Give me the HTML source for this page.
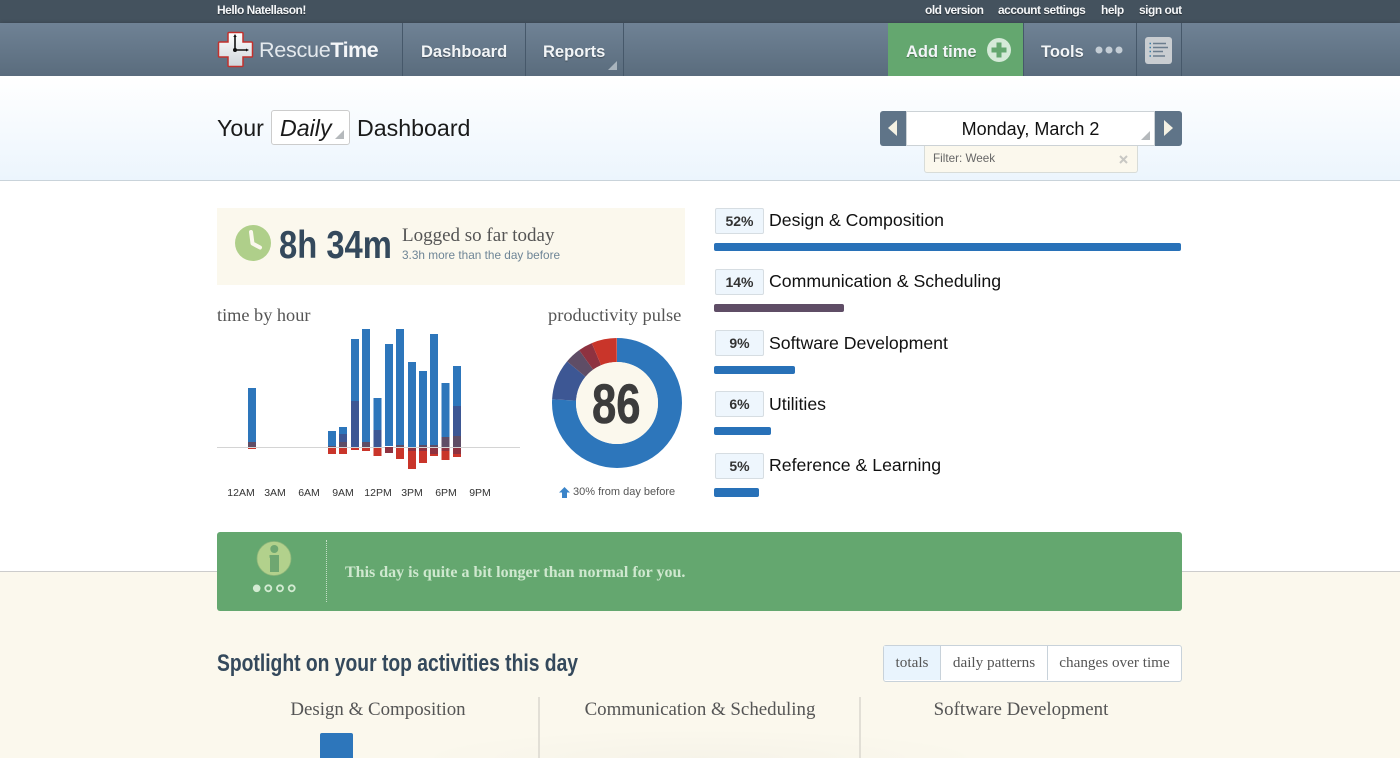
<!DOCTYPE html>
<html><head><meta charset="utf-8"><title>RescueTime</title>
<style>
html,body{margin:0;padding:0;background:#fff}
#p{position:relative;width:1400px;height:758px;overflow:hidden;font-family:"Liberation Sans",sans-serif;background:#fff}
.a{position:absolute}
.t{position:absolute;white-space:nowrap}
.s{font-family:"Liberation Serif",serif}
.c{transform-origin:0 50%;font-weight:bold}
.nav{font-size:16.5px;font-weight:bold;color:#f2f5f7;line-height:20px;top:42px;text-shadow:0 1px 1px rgba(0,0,0,.35)}
.top{font-size:12px;font-weight:bold;color:#f4f6f8;top:3px;line-height:14px;text-shadow:0 1px 1px rgba(0,0,0,.5);letter-spacing:-.5px}
.d{position:absolute;width:1px;top:23px;height:53px;background:#46586a}
.b{position:absolute;left:715px;width:47px;height:24px;background:#eef6fd;border:1px solid #d6dde2;border-radius:2px;text-align:center;font-size:14px;font-weight:bold;line-height:25px;color:#333}
.l{position:absolute;left:769px;font-size:17.7px;line-height:22px;color:#111;white-space:nowrap}
.bar{position:absolute;left:714px;height:8px;background:#2871b8;border-radius:2px}
.h{font-size:10.5px;color:#333;line-height:12px;top:487px;text-align:center;width:40px}
.tab{position:absolute;top:646px;height:34px;line-height:34px;font-size:15.2px;color:#555;text-align:center;font-family:"Liberation Serif",serif}
.ct{font-size:18.9px;color:#555;line-height:24px;top:698px;text-align:center;width:300px}
</style></head><body><div id="p">

<div class="a" style="left:0;top:0;width:1400px;height:23px;background:#44525e"></div>
<div class="a" style="left:0;top:23px;width:1400px;height:53px;background:linear-gradient(#6f8295,#5a6c7d);box-shadow:0 1px 4px rgba(0,0,0,.35)"></div>
<div class="a" style="left:0;top:76px;width:1400px;height:104px;background:linear-gradient(#fff,#ecf5fd);border-bottom:1px solid #c9d3da"></div>

<div class="t top" style="left:217px">Hello Natellason!</div>
<div class="t top" style="left:925px">old version</div>
<div class="t top" style="left:998px">account settings</div>
<div class="t top" style="left:1101px">help</div>
<div class="t top" style="left:1139px">sign out</div>

<svg class="a" style="left:217px;top:31px" width="37" height="37" viewBox="0 0 37 37">
<defs><linearGradient id="g" x1="0" y1="0" x2="0" y2="1"><stop offset="0" stop-color="#fff"/><stop offset="1" stop-color="#cfd5da"/></linearGradient></defs>
<path d="M12 1.500h13a1 1 0 0 1 1 1v8.500h8.500a1 1 0 0 1 1 1v13a1 1 0 0 1-1 1h-8.500v8.500a1 1 0 0 1-1 1h-13a1 1 0 0 1-1-1v-8.500h-8.500a1 1 0 0 1-1-1v-13a1 1 0 0 1 1-1h8.500v-8.500a1 1 0 0 1 1-1z" fill="url(#g)" stroke="#c2302c" stroke-width="1.500"/>
<path d="M18 5v14M18 19h12" stroke="#111" stroke-width="1.600" fill="none"/><circle cx="18" cy="19" r="2" fill="#111"/>
<path d="M16.300 6l1.700-3 1.700 3zM29 17.500l3 1.500-3 1.500z" fill="#111"/>
</svg>
<div class="t" style="left:259px;top:37px;font-size:21.6px;line-height:26px;color:#e4e9ed;letter-spacing:-.3px">Rescue<b style="color:#f4f6f8;font-weight:bold;letter-spacing:-.6px">Time</b></div>

<div class="d" style="left:402px"></div><div class="d" style="left:525px"></div><div class="d" style="left:623px"></div>
<div class="t nav" style="left:421px">Dashboard</div>
<div class="t nav" style="left:543px">Reports</div>
<svg class="a" style="left:608px;top:61px" width="10" height="10"><path d="M9 0v9H0z" fill="#a9b4bd"/></svg>

<div class="a" style="left:888px;top:23px;width:135px;height:53px;background:#64a76f"></div>
<div class="t nav" style="left:906px">Add time</div>
<svg class="a" style="left:987px;top:38px" width="24" height="24"><circle cx="12" cy="12" r="12" fill="#d5ead8"/><path d="M9.500 4.500h5v5H19.500v5h-5v5h-5v-5H4.500v-5h5z" fill="#64a76f"/></svg>
<div class="d" style="left:1023px"></div><div class="d" style="left:1136px"></div><div class="d" style="left:1181px"></div>
<div class="t nav" style="left:1041px">Tools</div>
<svg class="a" style="left:1095px;top:45px" width="30" height="10"><circle cx="4" cy="5" r="3.500" fill="#c4cdd5"/><circle cx="14" cy="5" r="3.500" fill="#c4cdd5"/><circle cx="24" cy="5" r="3.500" fill="#c4cdd5"/></svg>
<svg class="a" style="left:1145px;top:37px" width="28" height="28"><rect x="0" y="0" width="27" height="27" rx="3" fill="#c9cdd1"/><path d="M8 6.500h13M8 10.500h15M8 14.500h10M8 19h12" stroke="#6b7d8e" stroke-width="1.500"/><path d="M4.500 6.500h1.500M4.500 10.500h1.500M4.500 14.500h1.500M4.500 19h1.500" stroke="#3c7ea8" stroke-width="1.500"/></svg>

<div class="t" style="left:217px;top:114px;font-size:23.2px;line-height:28px;color:#1a1a1a">Your</div>
<div class="a" style="left:271px;top:110px;width:77px;height:33px;background:#fff;border:1px solid #ccc;border-radius:3px"></div>
<div class="t" style="left:280px;top:114px;font-size:23.2px;line-height:28px;font-style:italic;color:#1a1a1a">Daily</div>
<svg class="a" style="left:335px;top:130px" width="10" height="10"><path d="M9 0v9H0z" fill="#b5b9bc"/></svg>
<div class="t" style="left:357px;top:114px;font-size:23.2px;line-height:28px;color:#1a1a1a">Dashboard</div>

<div class="a" style="left:906px;top:111px;width:249px;height:35px;background:#fff;box-shadow:0 0 0 1px #ccd2d6 inset"></div>
<div class="a" style="left:880px;top:111px;width:26px;height:35px;background:#5f7488;border-radius:3px 0 0 3px"></div>
<div class="a" style="left:1155px;top:111px;width:27px;height:35px;background:#5f7488;border-radius:0 3px 3px 0"></div>
<svg class="a" style="left:888px;top:119px" width="10" height="18"><path d="M9 1v16L0 9z" fill="#f4f1e3"/></svg>
<svg class="a" style="left:1164px;top:119px" width="10" height="18"><path d="M0 1v16L9 9z" fill="#f4f1e3"/></svg>
<div class="t" style="left:906px;width:249px;text-align:center;top:118px;font-size:18px;line-height:22px;color:#111">Monday, March 2</div>
<svg class="a" style="left:1141px;top:131px" width="10" height="10"><path d="M9 0v9H0z" fill="#b5b9bc"/></svg>
<div class="a" style="left:924px;top:146px;width:212px;height:26px;background:#fbf8ed;border:1px solid #d8dcd8;border-top:0;border-radius:0 0 3px 3px"></div>
<div class="t" style="left:933px;top:152px;font-size:11.7px;line-height:14px;color:#666">Filter: Week</div>
<svg class="a" style="left:1119px;top:155px" width="9" height="9"><path d="M1 1l7 7M8 1L1 8" stroke="#c8c8c4" stroke-width="2"/></svg>

<div class="a" style="left:217px;top:208px;width:468px;height:77px;background:#fbf8ed"></div>
<svg class="a" style="left:235px;top:225px" width="36" height="36"><circle cx="18" cy="18" r="18" fill="#afcf8a"/><path d="M16 7l1.500 11.500L25 22.500" stroke="#fbf8ed" stroke-width="4" fill="none" stroke-linecap="round" stroke-linejoin="round"/></svg>
<div class="t c" style="left:279px;top:224px;font-size:39px;line-height:44px;color:#34495c;transform:scaleX(.84)">8h 34m</div>
<div class="t s" style="left:402px;top:225px;font-size:19px;line-height:22px;color:#555">Logged so far today</div>
<div class="t" style="left:402px;top:248px;font-size:11.8px;line-height:14px;color:#6e8596">3.3h more than the day before</div>

<div class="t s" style="left:217px;top:304px;font-size:18.3px;line-height:22px;color:#555">time by hour</div>
<svg class="a" style="left:0;top:0" width="700" height="520">
<rect x="217" y="447" width="303" height="1" fill="#d4d4d4"/>
<g fill="#2d76bb">
<rect x="248" y="388" width="8" height="54"/><rect x="328" y="431" width="8" height="15"/><rect x="339" y="427" width="8" height="7"/>
<rect x="351" y="339" width="8" height="62"/><rect x="362" y="329" width="8" height="113"/><rect x="373.500" y="398" width="8" height="32"/>
<rect x="385" y="344" width="8" height="102"/><rect x="396" y="329" width="8" height="116"/><rect x="408" y="362" width="8" height="85"/>
<rect x="419" y="371" width="8" height="74"/><rect x="430" y="334" width="8" height="111"/><rect x="441.500" y="383" width="8" height="54"/>
<rect x="453" y="366" width="8" height="40"/></g>
<g fill="#3d5794">
<rect x="339" y="434" width="8" height="8"/><rect x="351" y="401" width="8" height="46"/><rect x="373.500" y="430" width="8" height="17"/>
<rect x="453" y="406" width="8" height="30"/></g>
<g fill="#5f4d66">
<rect x="248" y="442" width="8" height="5"/><rect x="328" y="446" width="8" height="1"/><rect x="339" y="442" width="8" height="5"/>
<rect x="362" y="442" width="8" height="5"/><rect x="441.500" y="437" width="8" height="10"/><rect x="453" y="436" width="8" height="11"/>
<rect x="396" y="445" width="8" height="2"/><rect x="419" y="445" width="8" height="2"/><rect x="430" y="445" width="8" height="2"/></g>
<g fill="#8e3240">
<rect x="385" y="447" width="8" height="6"/><rect x="408" y="448" width="8" height="3"/><rect x="419" y="448" width="8" height="3"/>
<rect x="430" y="448" width="8" height="6"/><rect x="441.500" y="448" width="8" height="3"/><rect x="453" y="448" width="8" height="6"/></g>
<g fill="#c9352a">
<rect x="248" y="448" width="8" height="1"/><rect x="328" y="448" width="8" height="6"/><rect x="339" y="448" width="8" height="6"/>
<rect x="351" y="448" width="8" height="2"/><rect x="362" y="448" width="8" height="3"/><rect x="373.500" y="448" width="8" height="8"/>
<rect x="396" y="448" width="8" height="11"/><rect x="408" y="451" width="8" height="18"/><rect x="419" y="451" width="8" height="12"/>
<rect x="430" y="454" width="8" height="2"/><rect x="441.500" y="451" width="8" height="9"/><rect x="453" y="454" width="8" height="3"/></g>
</svg>
<div class="t h" style="left:221px">12AM</div><div class="t h" style="left:255px">3AM</div><div class="t h" style="left:289px">6AM</div><div class="t h" style="left:323px">9AM</div><div class="t h" style="left:358px">12PM</div><div class="t h" style="left:392px">3PM</div><div class="t h" style="left:426px">6PM</div><div class="t h" style="left:460px">9PM</div>

<div class="t s" style="left:548px;top:304px;font-size:18.4px;line-height:22px;color:#555">productivity pulse</div>
<svg class="a" style="left:547px;top:333px" width="140" height="140" viewBox="0 0 140 140">
<g fill="none" stroke-width="24" transform="rotate(-90 70 70)">
<circle cx="70" cy="70" r="53" pathLength="360" stroke="#2d76bb" stroke-dasharray="273.500 360"/>
<circle cx="70" cy="70" r="53" pathLength="360" stroke="#3d5794" stroke-dasharray="36.500 360" stroke-dashoffset="-273.500"/>
<circle cx="70" cy="70" r="53" pathLength="360" stroke="#5f4d66" stroke-dasharray="14.600 360" stroke-dashoffset="-310"/>
<circle cx="70" cy="70" r="53" pathLength="360" stroke="#8e3240" stroke-dasharray="12.800 360" stroke-dashoffset="-324.600"/>
<circle cx="70" cy="70" r="53" pathLength="360" stroke="#c9352a" stroke-dasharray="22.600 360" stroke-dashoffset="-337.400"/>
</g><circle cx="70" cy="70" r="41" fill="#fbf8ed"/></svg>
<div class="t c" style="left:592px;top:372px;font-size:56px;line-height:64px;color:#3c3c3c;transform:scaleX(.78);-webkit-text-stroke:.6px #3c3c3c">86</div>
<svg class="a" style="left:559px;top:487px" width="11" height="11"><path d="M5.500 0L11 5.500H8V11H3V5.500H0z" fill="#3a84c9"/></svg>
<div class="t" style="left:573px;top:486px;font-size:11px;line-height:13px;color:#555">30% from day before</div>

<div class="b" style="top:208px">52%</div><div class="l" style="top:209px">Design &amp; Composition</div><div class="bar" style="top:243px;width:467px"></div>
<div class="b" style="top:269px">14%</div><div class="l" style="top:270px">Communication &amp; Scheduling</div><div class="bar" style="top:304px;width:130px;background:#5f4d66"></div>
<div class="b" style="top:330px">9%</div><div class="l" style="top:332px">Software Development</div><div class="bar" style="top:366px;width:81px"></div>
<div class="b" style="top:391px">6%</div><div class="l" style="top:393px">Utilities</div><div class="bar" style="top:427px;width:57px"></div>
<div class="b" style="top:453px">5%</div><div class="l" style="top:454px">Reference &amp; Learning</div><div class="bar" style="top:488px;width:45px;height:9px"></div>

<div class="a" style="left:0;top:571px;width:1400px;height:187px;background:#fbf8ed;border-top:1px solid #ccc"></div>
<div class="a" style="left:400px;top:728px;width:600px;height:30px;background:radial-gradient(ellipse at center bottom,rgba(0,0,0,.02),rgba(0,0,0,0) 70%)"></div>
<div class="a" style="left:217px;top:532px;width:965px;height:79px;background:#64a76f;border-radius:3px"></div>
<svg class="a" style="left:250px;top:540px" width="50" height="60">
<circle cx="24" cy="18.500" r="17" fill="#b2d18c" stroke="#8fb67a" stroke-width=".8"/>
<circle cx="24.300" cy="9" r="4" fill="#6fa771"/><path d="M19.500 15h9.500v17h-9v-14l-.5-.5z" fill="#6fa771"/>
<circle cx="6.700" cy="48.300" r="3.800" fill="#d3ebd2"/>
<circle cx="18.300" cy="48.300" r="3" fill="none" stroke="#d3ebd2" stroke-width="1.800"/><circle cx="30" cy="48.300" r="3" fill="none" stroke="#d3ebd2" stroke-width="1.800"/><circle cx="41.700" cy="48.300" r="3" fill="none" stroke="#d3ebd2" stroke-width="1.800"/>
</svg>
<div class="a" style="left:326px;top:540px;width:0;height:62px;border-left:1px dotted #c5dfc7"></div>
<div class="t s" style="left:345px;top:562px;font-size:16px;line-height:21px;font-weight:bold;color:#cfe8cf">This day is quite a bit longer than normal for you.</div>

<div class="t c" style="left:217px;top:650px;font-size:24.500px;line-height:28px;color:#34495c;transform:scaleX(.787)">Spotlight on your top activities this day</div>

<div class="a" style="left:883px;top:645px;width:297px;height:35px;background:#fff;border:1px solid #c8d2da;border-radius:3px"></div>
<div class="tab" style="left:884px;width:56px;background:#e9f4fd;border-right:1px solid #c8d2da">totals</div>
<div class="tab" style="left:941px;width:106px;border-right:1px solid #c8d2da">daily patterns</div>
<div class="tab" style="left:1048px;width:133px">changes over time</div>

<div class="t s ct" style="left:228px">Design &amp; Composition</div>
<div class="t s ct" style="left:550px">Communication &amp; Scheduling</div>
<div class="t s ct" style="left:871px">Software Development</div>
<div class="a" style="left:538px;top:697px;width:2px;height:61px;background:#e2dfd6"></div>
<div class="a" style="left:859px;top:697px;width:2px;height:61px;background:#e2dfd6"></div>
<div class="a" style="left:320px;top:733px;width:33px;height:25px;background:#2d76bb;border-radius:2px 2px 0 0"></div>
</div></body></html>
